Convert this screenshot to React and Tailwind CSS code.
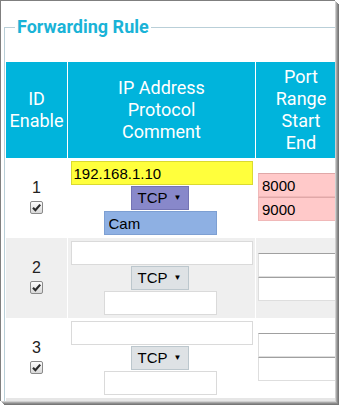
import React from 'react';

const rows = [
  { id: 1, ip: '192.168.1.10', comment: 'Cam', start: '8000', end: '9000', hl: true },
  { id: 2, ip: '', comment: '', start: '', end: '', hl: false },
  { id: 3, ip: '', comment: '', start: '', end: '', hl: false },
];

const sans = "font-['Liberation_Sans',Arial,sans-serif]";

function Check() {
  return (
    <span className="flex h-[13px] w-[13px] items-center justify-center rounded-[2px] border border-[#8a8a8a] bg-gradient-to-b from-[#fdfdfd] to-[#d9d9d9]">
      <svg width="11" height="11" viewBox="0 0 11 11">
        <path d="M2 5.8 L4.4 8.2 L9.2 2.6" fill="none" stroke="#2b2b2b" strokeWidth="2.2" />
      </svg>
    </span>
  );
}

function Row({ row }) {
  const bg = row.id === 2 ? 'bg-[#efefef]' : 'bg-white';
  return (
    <>
      <div className={`${bg} h-[80px] flex flex-col items-center pt-[21px] ${sans}`}>
        <span className="text-[16px] leading-[18px] text-[#222]">{row.id}</span>
        <span className="mt-[4px]">
          <Check />
        </span>
      </div>
      <div className={`${bg} h-[80px] flex flex-col items-center gap-px pt-[3px] ${sans}`}>
        <input
          readOnly
          value={row.ip}
          className={`h-[24px] w-[182px] border pl-[2px] text-[15px] text-black outline-none ${
            row.hl ? 'bg-[#ffff3c] border-[#dada30]' : 'bg-white border-[#dadada]'
          }`}
        />
        <div
          className={`mr-[4px] flex h-[24px] w-[58px] items-center border pl-[6px] text-[15px] text-black ${
            row.hl ? 'bg-[#8888ca] border-[#7474b4]' : 'bg-[#dee2e5] border-[#bcc7cd]'
          }`}
        >
          <span>TCP</span>
          <span className="ml-[6px] text-[8px]">▼</span>
        </div>
        <input
          readOnly
          value={row.comment}
          className={`mr-[3px] h-[24px] w-[113px] border pl-[4px] text-[15px] text-black outline-none ${
            row.hl ? 'bg-[#8eb0e3] border-[#7d9fd2]' : 'bg-white border-[#dadada]'
          }`}
        />
      </div>
      <div className={`${bg} h-[80px] flex flex-col pl-[2px] pt-[15px] ${sans}`}>
        {[row.start, row.end].map((v, i) => (
          <input
            key={i}
            readOnly
            value={v}
            className={`h-[24px] w-[86px] border pl-[3px] text-[15px] text-black outline-none ${
              row.hl
                ? 'bg-[#ffc9c9] border-[#f0b8b8] border-t-[#e0a8a8]'
                : 'bg-white border-[#dedede] border-t-[#a0a0a0]'
            }`}
          />
        ))}
      </div>
    </>
  );
}

export default function App() {
  return (
    <div className="h-[405px] w-[339px] bg-white">
      <div className="h-[401px] w-[335px] overflow-hidden border-l border-t border-[#7f7f7f] bg-white pl-[3px] shadow-[1px_1px_0_#cfcfcf,2px_2px_0_#a8a8a8,3px_3px_0_#8c8c8c,4px_4px_0_#777]">
        <fieldset className="mt-[14px] w-[380px] border border-[#b9cfd8] pb-2">
          <legend className="ml-[10px] px-[2px] font-['Roboto',sans-serif] text-[18px] font-bold leading-[24px] text-[#1ab3d7]">
            Forwarding Rule
          </legend>
          <div className="ml-px mt-[23px] grid grid-cols-[61px_187px_90px] gap-x-px border-b-[3px] border-[#e6e6e6] bg-white">
            {['ID\nEnable', 'IP Address\nProtocol\nComment', 'Port\nRange\nStart\nEnd'].map((h) => (
              <div
                key={h}
                className="flex h-[96px] items-center justify-center whitespace-pre-line bg-[#00b4dc] text-center font-['Roboto',sans-serif] text-[18px] leading-[22px] text-white"
              >
                {h}
              </div>
            ))}
            {rows.map((r) => (
              <Row key={r.id} row={r} />
            ))}
          </div>
        </fieldset>
      </div>
    </div>
  );
}
